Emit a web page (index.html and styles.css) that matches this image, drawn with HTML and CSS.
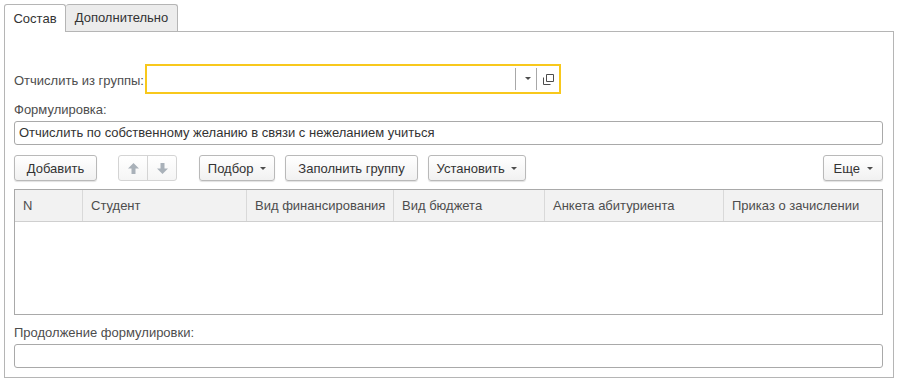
FILE: index.html
```html
<!DOCTYPE html>
<html lang="ru">
<head>
    <meta charset="UTF-8">
    <title>Отчисление</title>
    <link rel="stylesheet" href="styles.css">
</head>
<body>
    <div class="tabs">
        <div class="tab active">Состав</div>
        <div class="tab">Дополнительно</div>
    </div>

    <div class="panel">
        <div class="group-row">
            <label class="row-label">Отчислить из группы:</label>
            <div class="select-box">
                <div class="select-value"></div>
                <span class="sep"></span>
                <span class="select-btn"><span class="tri"></span></span>
                <span class="sep"></span>
                <span class="select-btn">
                    <svg width="11" height="11" viewBox="0 0 11 11">
                        <path d="M3.5 0.5h7v7h-7z M0.5 3.5v7h7" fill="none" stroke="#4d4d4d" stroke-width="1"/>
                    </svg>
                </span>
            </div>
        </div>

        <div class="field-label first">Формулировка:</div>
        <div class="text-input">Отчислить по собственному желанию в связи с нежеланием учиться</div>

        <div class="toolbar">
            <button class="btn btn-add">Добавить</button>
            <div class="btn-group">
                <button class="btn-arrow">
                    <svg width="11" height="11" viewBox="0 0 11 11"><path d="M5.5 0L11 5.5H7.5V11h-4V5.5H0z" fill="#a9b1b9"/></svg>
                </button>
                <button class="btn-arrow">
                    <svg width="11" height="11" viewBox="0 0 11 11"><path d="M5.5 11L11 5.5H7.5V0h-4v5.5H0z" fill="#a9b1b9"/></svg>
                </button>
            </div>
            <button class="btn btn-pick">Подбор <span class="tri"></span></button>
            <button class="btn btn-fill">Заполнить группу</button>
            <button class="btn btn-set">Установить <span class="tri"></span></button>
            <button class="btn btn-more">Еще <span class="tri"></span></button>
        </div>

        <div class="table">
            <div class="thead">
                <div class="th">N</div>
                <div class="th">Студент</div>
                <div class="th">Вид финансирования</div>
                <div class="th">Вид бюджета</div>
                <div class="th">Анкета абитуриента</div>
                <div class="th">Приказ о зачислении</div>
            </div>
        </div>

        <div class="field-label second">Продолжение формулировки:</div>
        <div class="text-input"></div>
    </div>
</body>
</html>
```

FILE: styles.css
```css
* {
    box-sizing: border-box;
}

body {
    margin: 0;
    font-family: "Liberation Sans", Arial, sans-serif;
    font-size: 13px;
    color: #4d4d4d;
    background-color: white;
}

/* вкладки */
.tabs {
    display: flex;
    align-items: flex-end;
    padding: 4px 0 0 4px;
    height: 32px;
}

.tab {
    width: 112px;
    height: 27px;
    line-height: 26px;
    text-align: center;
    border: 1px solid #b5b5b5;
    border-bottom: none;
    border-radius: 3px 3px 0 0;
    background-color: #ececec;
    color: #333;
    margin-bottom: 1px;
}

.tab.active {
    width: 62px;
    height: 28px;
    line-height: 27px;
    background-color: white;
    margin-bottom: 0;
    position: relative;
    z-index: 1;
}

.tab + .tab {
    border-left: none;
}

.panel {
    margin: -1px 4px 0 4px;
    height: 347px;
    border: 1px solid #b5b5b5;
    padding: 32px 10px 0 9px;
}

/* поле группы */
.group-row {
    display: flex;
    align-items: center;
    height: 30px;
}

.row-label {
    width: 131px;
    padding-top: 3px;
}

.select-box {
    display: flex;
    align-items: center;
    width: 416px;
    height: 30px;
    border: 2px solid #f8c81c;
    background-color: white;
}

.select-value {
    flex: 1;
}

.sep {
    width: 1px;
    height: 22px;
    background-color: #a8a8a8;
}

.select-btn {
    width: 20px;
    display: flex;
    justify-content: center;
    align-items: center;
}

.select-btn:last-child {
    width: 22px;
}

.tri {
    display: inline-block;
    width: 0;
    height: 0;
    border-left: 3px solid transparent;
    border-right: 3px solid transparent;
    border-top: 3px solid #4d4d4d;
    vertical-align: middle;
    margin-left: 3px;
    margin-bottom: 2px;
}

/* подписи и текстовые поля */
.field-label {
    height: 16px;
    line-height: 16px;
}

.field-label.first {
    margin-top: 8px;
}

.field-label.second {
    margin-top: 10px;
}

.text-input {
    margin-top: 3px;
    height: 24px;
    line-height: 22px;
    border: 1px solid #a9a9a9;
    border-radius: 3px;
    padding: 0 4px;
    color: #333;
}

/* кнопки */
.toolbar {
    display: flex;
    margin-top: 10px;
    height: 26px;
}

.btn {
    height: 26px;
    padding: 0;
    border: 1px solid #b9b9b9;
    border-radius: 3px;
    background: linear-gradient(#ffffff, #f1f1f1);
    box-shadow: 0 1px 1px rgba(0,0,0,0.12);
    font-family: inherit;
    font-size: 13px;
    color: #333;
    margin-right: 10px;
    white-space: nowrap;
}

.btn-add {
    width: 83px;
    margin-right: 21px;
}

.btn-group {
    display: flex;
    width: 59px;
    height: 26px;
    border: 1px solid #d4d4d4;
    border-radius: 3px;
    background: linear-gradient(#ffffff, #f5f5f5);
    margin-right: 22px;
}

.btn-arrow {
    flex: 1;
    border: none;
    background: transparent;
    display: flex;
    justify-content: center;
    align-items: center;
    padding: 0;
}

.btn-arrow + .btn-arrow {
    border-left: 1px solid #d4d4d4;
}

.btn-pick {
    width: 76px;
}

.btn-fill {
    width: 133px;
}

.btn-set {
    width: 98px;
}

.btn-more {
    width: 60px;
    margin-left: auto;
    margin-right: 0;
}

/* таблица */
.table {
    margin-top: 8px;
    height: 126px;
    border: 1px solid #a9a9a9;
}

.thead {
    display: grid;
    grid-template-columns: 67px 164px 147px 151px 179px 1fr;
    height: 32px;
    background-color: #f2f2f2;
    border-bottom: 1px solid #cfcfcf;
}

.th {
    line-height: 31px;
    padding-left: 8px;
    border-left: 1px solid #d9d9d9;
    white-space: nowrap;
    overflow: hidden;
}

.th:first-child {
    border-left: none;
}
```
